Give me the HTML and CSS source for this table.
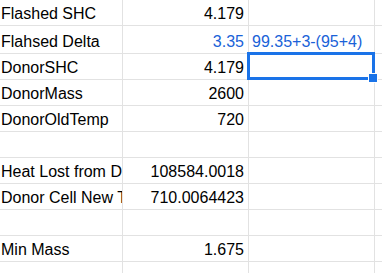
FILE: index.html
```html
<!DOCTYPE html>
<html>
<head>
<meta charset="utf-8">
<link rel="stylesheet" href="styles.css">
</head>
<body>
<div class="sheet">
  <div class="grid">
    <div class="cell label">Flashed SHC</div><div class="cell num">4.179</div><div class="cell"></div><div class="cell last"></div>
    <div class="cell label">Flahsed Delta</div><div class="cell num blue">3.35</div><div class="cell text blue">99.35+3-(95+4)</div><div class="cell last"></div>
    <div class="cell label">DonorSHC</div><div class="cell num">4.179</div><div class="cell"></div><div class="cell last"></div>
    <div class="cell label">DonorMass</div><div class="cell num">2600</div><div class="cell"></div><div class="cell last"></div>
    <div class="cell label">DonorOldTemp</div><div class="cell num">720</div><div class="cell"></div><div class="cell last"></div>
    <div class="cell label"></div><div class="cell num"></div><div class="cell"></div><div class="cell last"></div>
    <div class="cell label">Heat Lost from Donor</div><div class="cell num">108584.0018</div><div class="cell"></div><div class="cell last"></div>
    <div class="cell label">Donor Cell New Temp</div><div class="cell num">710.0064423</div><div class="cell"></div><div class="cell last"></div>
    <div class="cell label"></div><div class="cell num"></div><div class="cell"></div><div class="cell last"></div>
    <div class="cell label">Min Mass</div><div class="cell num">1.675</div><div class="cell"></div><div class="cell last"></div>
    <div class="cell label"></div><div class="cell num"></div><div class="cell"></div><div class="cell last"></div>
  </div>
  <div class="selection"><span class="handle"></span></div>
</div>
</body>
</html>
```
FILE: styles.css
```css
html, body {
  margin: 0;
  padding: 0;
  background: #ffffff;
  overflow: hidden;
}
.sheet {
  position: relative;
  width: 382px;
  height: 273px;
  overflow: hidden;
  font-family: "Liberation Sans", Arial, sans-serif;
  font-size: 16px;
  color: #000000;
}
.grid {
  display: grid;
  grid-template-columns: 123px 126px 126px 40px;
  grid-template-rows: 26px 28px repeat(9, 26px);
}
.cell {
  box-sizing: border-box;
  border-right: 1px solid #e2e2e2;
  border-bottom: 1px solid #e2e2e2;
  display: flex;
  align-items: flex-end;
  overflow: hidden;
  white-space: nowrap;
  line-height: 18px;
  padding-bottom: 2px;
}
.label {
  padding-left: 1px;
}
.num {
  justify-content: flex-end;
  padding-right: 4px;
}
.text {
  padding-left: 3px;
}
.blue {
  color: #1a62d8;
}
.selection {
  position: absolute;
  left: 247px;
  top: 52px;
  width: 128px;
  height: 28px;
  box-sizing: border-box;
  border: 3px solid #1a73e8;
}
.handle {
  position: absolute;
  right: -6px;
  bottom: -6px;
  width: 8px;
  height: 8px;
  background: #1a73e8;
  border: 1px solid #ffffff;
}
```
